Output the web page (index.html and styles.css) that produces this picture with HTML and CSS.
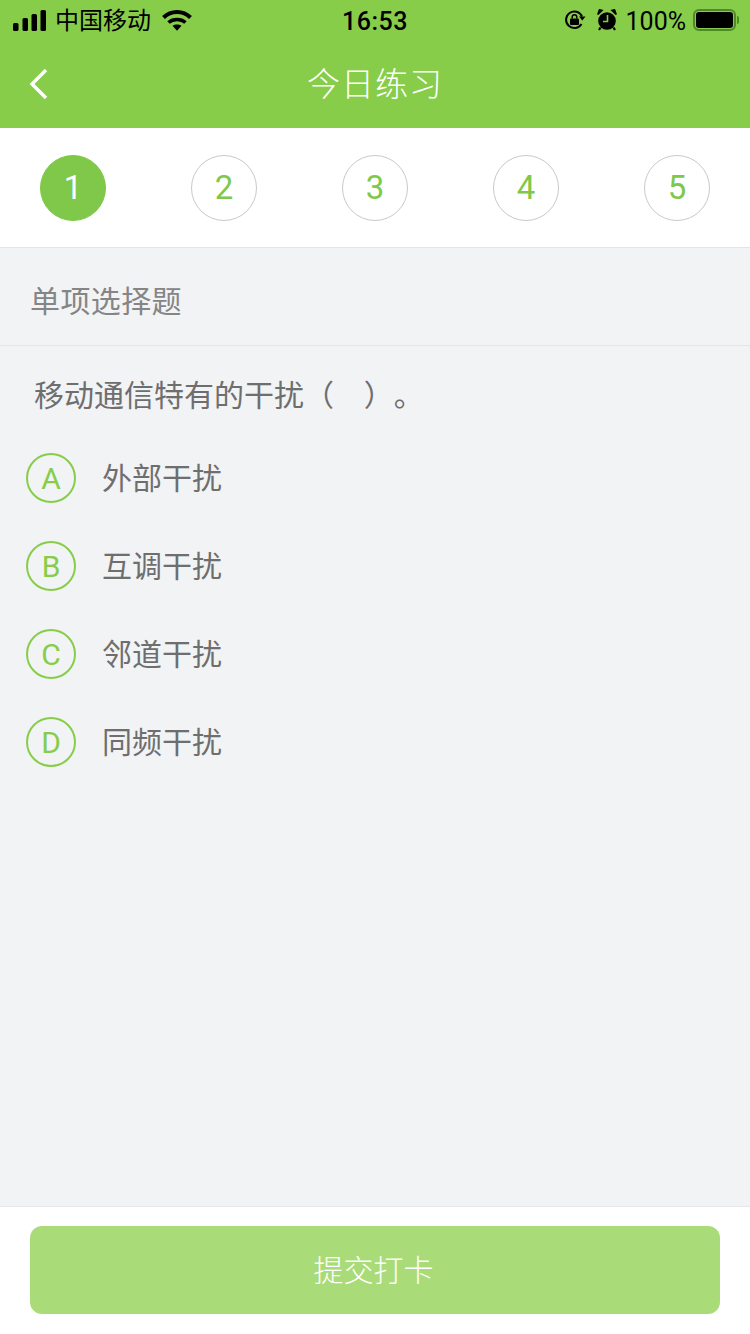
FILE: index.html
```html
<!DOCTYPE html>
<html lang="zh-CN">
<head>
  <meta charset="UTF-8">
  <title>今日练习</title>
  <link rel="stylesheet" href="styles.css">
</head>
<body>
  <div class="top">
    <div class="status-bar">
      <div class="status-left">
        <svg class="signal" width="34" height="21" viewBox="0 0 34 21">
          <rect x="0" y="13" width="5.5" height="8" rx="1.5"/>
          <rect x="9.500" y="8" width="5.5" height="13" rx="1.5"/>
          <rect x="18.500" y="4" width="5.5" height="17" rx="1.5"/>
          <rect x="27.500" y="0" width="5.5" height="21" rx="1.5"/>
        </svg>
        <span class="carrier">中国移动</span>
        <svg class="wifi" width="30" height="22" viewBox="0 0 30 22">
          <path d="M1.500 8.500C9 1 21 1 28.500 8.500" fill="none" stroke="#000" stroke-width="4"/>
          <path d="M6.500 13.500C11 9.500 19 9.500 23.500 13.500" fill="none" stroke="#000" stroke-width="3.600"/>
          <path d="M10.500 16.800C13 15 17 15 19.500 16.800L15 21.800Z"/>
        </svg>
      </div>
      <div class="time">16:53</div>
      <div class="status-right">
        <svg class="lock" width="22" height="22" viewBox="0 0 22 22">
          <path d="M17.500 15A8.300 8.300 0 1 1 18 7.500" fill="none" stroke="#000" stroke-width="2"/>
          <path d="M15 7.500H21.500L18.300 11.500Z"/>
          <rect x="6" y="9.500" width="9" height="6.500" rx="1"/>
          <path d="M8.200 9.500V8A2.300 2.300 0 0 1 12.800 8V9.500" fill="none" stroke="#000" stroke-width="1.500"/>
        </svg>
        <svg class="alarm" width="20" height="22" viewBox="0 0 20 22">
          <circle cx="10" cy="12" r="8.800"/>
          <path d="M.8 5.500L5 1.500 2.500 .8ZM19.200 5.500L15 1.500 17.500 .8Z" stroke="#000" stroke-width="1.600"/>
          <path d="M3.500 18.500L2 21M16.500 18.500L18 21" stroke="#000" stroke-width="2.200"/>
          <path d="M10.500 6V12.500H6" fill="none" stroke="#87cd4a" stroke-width="1.600"/>
        </svg>
        <span class="battery-text">100%</span>
        <div class="battery"><div class="battery-fill"></div></div>
        <div class="battery-cap"></div>
      </div>
    </div>
    <div class="nav-bar">
      <svg class="back" width="20" height="32" viewBox="0 0 20 32">
        <path d="M17 2L3 16L17 30" fill="none" stroke="#fff" stroke-width="3.400"/>
      </svg>
      <h1>今日练习</h1>
    </div>
  </div>

  <div class="steps">
    <div class="step active">1</div>
    <div class="step">2</div>
    <div class="step">3</div>
    <div class="step">4</div>
    <div class="step">5</div>
  </div>

  <div class="question-type">单项选择题</div>

  <div class="content">
    <p class="question">移动通信特有的干扰（&nbsp;&nbsp;&nbsp;&nbsp;）&#8203;。</p>
    <div class="option"><span class="letter">A</span><span class="option-text">外部干扰</span></div>
    <div class="option"><span class="letter">B</span><span class="option-text">互调干扰</span></div>
    <div class="option"><span class="letter">C</span><span class="option-text">邻道干扰</span></div>
    <div class="option"><span class="letter">D</span><span class="option-text">同频干扰</span></div>
  </div>

  <div class="footer">
    <button class="submit-btn">提交打卡</button>
  </div>
</body>
</html>
```

FILE: styles.css
```css
* {
  box-sizing: border-box;
}
html, body {
  height: 100%;
}
body {
  margin: 0;
  display: flex;
  flex-direction: column;
  height: 1334px;
  background-color: #f2f3f5;
  font-family: Roboto, "Noto Sans CJK SC", sans-serif;
  overflow: hidden;
}
.top {
  height: 128px;
  background-color: #87cd4a;
}
.status-bar {
  position: relative;
  display: flex;
  justify-content: space-between;
  align-items: center;
  height: 40px;
  padding: 0 11px 0 13px;
  color: #000;
}
.status-left, .status-right {
  display: flex;
  align-items: center;
}
.carrier {
  margin-left: 8px;
  padding-bottom: 4px;
  font-size: 24px;
}
.wifi {
  margin-left: 11px;
}
.time {
  position: absolute;
  left: 0;
  right: 0;
  padding-top: 2px;
  text-align: center;
  font-size: 25px;
  font-weight: 500;
  letter-spacing: 0.5px;
}
.alarm {
  margin-left: 11px;
}
.battery-text {
  margin-left: 9px;
  padding-top: 2px;
  font-size: 25px;
}
.battery {
  margin-left: 7px;
  width: 43px;
  height: 22px;
  padding: 1px;
  border: 2px solid #4f8a2a;
  border-radius: 6px;
}
.battery-fill {
  height: 100%;
  background: #000;
  border-radius: 3px;
}
.battery-cap {
  width: 2px;
  height: 8px;
  margin-left: 1px;
  background: #4f8a2a;
  border-radius: 0 2px 2px 0;
}
.nav-bar {
  position: relative;
  display: flex;
  align-items: center;
  justify-content: center;
  height: 88px;
  padding-bottom: 4px;
}
.nav-bar h1 {
  margin: 0;
  color: #fff;
  font-size: 33px;
  font-weight: 300;
  letter-spacing: 1px;
}
.back {
  position: absolute;
  left: 29px;
  top: 28px;
}
.steps {
  display: flex;
  justify-content: space-between;
  align-items: center;
  height: 120px;
  padding: 0 40px 0;
  background: #fff;
  border-bottom: 1px solid #e4e5e7;
}
.step {
  display: flex;
  align-items: center;
  justify-content: center;
  width: 66px;
  height: 66px;
  border: 1px solid #c9c9c9;
  border-radius: 50%;
  color: #7fc84a;
  font-size: 33px;
}
.step.active {
  background: #7fc84a;
  border-color: #7fc84a;
  color: #fff;
}
.question-type {
  display: flex;
  align-items: center;
  height: 98px;
  padding: 4px 0 0 30px;
  border-bottom: 1px solid #e4e5e7;
  color: #858585;
  font-size: 30px;
  letter-spacing: 0.4px;
}
.content {
  flex: 1;
}
.question {
  margin: 0;
  height: 88px;
  padding: 28px 0 0 34px;
  color: #6e6e6e;
  font-size: 30px;
  line-height: 44px;
}
.option {
  display: flex;
  align-items: center;
  height: 88px;
  padding-left: 26px;
  color: #6e6e6e;
  font-size: 30px;
}
.option-text {
  padding-bottom: 4px;
}
.letter {
  display: flex;
  align-items: center;
  justify-content: center;
  width: 50px;
  height: 50px;
  margin-right: 26px;
  border: 2px solid #87cd4a;
  border-radius: 50%;
  color: #87cd4a;
  font-size: 30px;
}
.footer {
  height: 128px;
  padding: 19px 30px 0;
  background: #fff;
  border-top: 1px solid #e6e7e9;
}
.submit-btn {
  display: block;
  width: 100%;
  height: 88px;
  padding: 0 3px 5px 0;
  border: none;
  border-radius: 12px;
  background: #aadb79;
  color: #fff;
  font-family: inherit;
  font-size: 30px;
  font-weight: 300;
}
```
